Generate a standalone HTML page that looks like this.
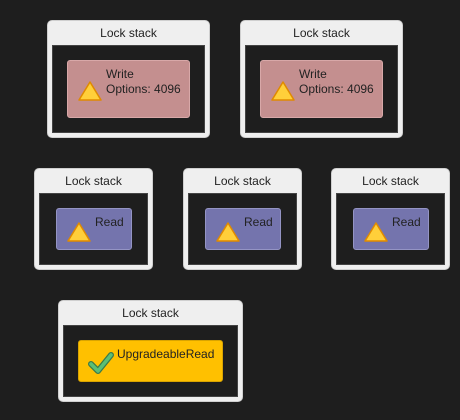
<!DOCTYPE html>
<html><head><style>
body{margin:0;width:460px;height:420px;background:#1e1e1e;position:relative;overflow:hidden;font-family:"Liberation Sans",sans-serif;}
.o{position:absolute;background:#efefef;border:1px solid #cfcfcf;border-radius:5px;box-sizing:border-box;}
.t{position:absolute;left:0;right:0;top:5px;text-align:center;font-size:12px;color:#222;}
.i{position:absolute;left:4px;right:4px;bottom:4px;background:#1e1e1e;border:1px solid #444;}
.c{position:absolute;border-radius:3px;box-sizing:border-box;font-size:12px;color:#222;}
.p{background:#c48f8f;border:1px solid #d8a8a8;}
.b{background:#7474ad;border:1px solid #9494c4;}
.y{background:#ffc000;border:1px solid #d9a400;}
.c span{position:absolute;line-height:15px;}
svg{position:absolute;}
</style></head><body>
<div class="o" style="left:47px;top:20px;width:163px;height:118px"><div class="t">Lock stack</div><div class="i" style="top:24px"></div></div>
<div class="c p" style="left:67px;top:60px;width:123px;height:58px"><span style="left:38px;top:6px">Write<br>Options: 4096</span>
<svg style="left:9px;top:19px" width="26" height="22"><path d="M13 2 L24 20 L2 20 Z" fill="#ffcf3a" stroke="#e08a00" stroke-width="1.5" stroke-linejoin="round"/></svg></div>

<div class="o" style="left:240px;top:20px;width:163px;height:118px"><div class="t">Lock stack</div><div class="i" style="top:24px"></div></div>
<div class="c p" style="left:260px;top:60px;width:123px;height:58px"><span style="left:38px;top:6px">Write<br>Options: 4096</span>
<svg style="left:9px;top:19px" width="26" height="22"><path d="M13 2 L24 20 L2 20 Z" fill="#ffcf3a" stroke="#e08a00" stroke-width="1.5" stroke-linejoin="round"/></svg></div>

<div class="o" style="left:34px;top:168px;width:119px;height:102px"><div class="t">Lock stack</div><div class="i" style="top:24px"></div></div>
<div class="c b" style="left:56px;top:208px;width:76px;height:42px"><span style="left:38px;top:6px">Read</span>
<svg style="left:9px;top:12px" width="26" height="22"><path d="M13 2 L24 20 L2 20 Z" fill="#ffcf3a" stroke="#e08a00" stroke-width="1.5" stroke-linejoin="round"/></svg></div>

<div class="o" style="left:183px;top:168px;width:119px;height:102px"><div class="t">Lock stack</div><div class="i" style="top:24px"></div></div>
<div class="c b" style="left:205px;top:208px;width:76px;height:42px"><span style="left:38px;top:6px">Read</span>
<svg style="left:9px;top:12px" width="26" height="22"><path d="M13 2 L24 20 L2 20 Z" fill="#ffcf3a" stroke="#e08a00" stroke-width="1.5" stroke-linejoin="round"/></svg></div>

<div class="o" style="left:331px;top:168px;width:119px;height:102px"><div class="t">Lock stack</div><div class="i" style="top:24px"></div></div>
<div class="c b" style="left:353px;top:208px;width:76px;height:42px"><span style="left:38px;top:6px">Read</span>
<svg style="left:9px;top:12px" width="26" height="22"><path d="M13 2 L24 20 L2 20 Z" fill="#ffcf3a" stroke="#e08a00" stroke-width="1.5" stroke-linejoin="round"/></svg></div>

<div class="o" style="left:58px;top:300px;width:185px;height:102px"><div class="t">Lock stack</div><div class="i" style="top:24px"></div></div>
<div class="c y" style="left:78px;top:340px;width:145px;height:42px"><span style="left:38px;top:6px">UpgradeableRead</span>
<svg style="left:9px;top:10px" width="26" height="24"><path d="M3 13 L10 20 L23 4" fill="none" stroke="#3a7a4a" stroke-width="6" stroke-linejoin="round" stroke-linecap="round"/><path d="M3 13 L10 20 L23 4" fill="none" stroke="#5cbf75" stroke-width="3.5" stroke-linejoin="round" stroke-linecap="round"/></svg></div>
</body></html>
